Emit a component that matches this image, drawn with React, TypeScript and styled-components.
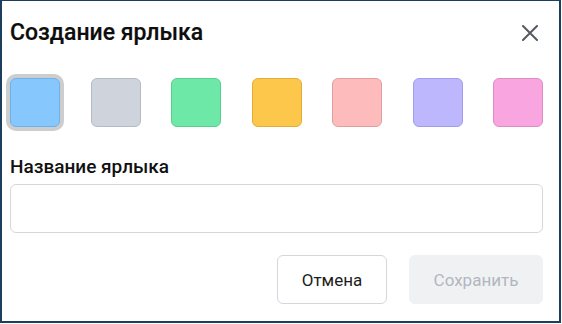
import React, { useState } from "react";
import styled, { createGlobalStyle } from "styled-components";

const GlobalStyle = createGlobalStyle`
  * { box-sizing: border-box; }
  body {
    margin: 0;
    font-family: Roboto, "Noto Sans", sans-serif;
    background: #fff;
  }
`;

const COLORS = [
  { fill: "#86c8fd", edge: "#6eb0ea" },
  { fill: "#cfd4dc", edge: "#b5bbc4" },
  { fill: "#6de8a6", edge: "#58cf8f" },
  { fill: "#fdc74c", edge: "#e2ad3a" },
  { fill: "#febbbc", edge: "#e0a0a2" },
  { fill: "#bdb7fd", edge: "#a39cea" },
  { fill: "#f9a6e0", edge: "#de8cc5" },
];

export default function App() {
  const [selected, setSelected] = useState(0);
  const [name, setName] = useState("");

  return (
    <>
      <GlobalStyle />
      <Dialog>
        <Header>
          <Title>Создание ярлыка</Title>
          <CloseBtn type="button" aria-label="Закрыть">
            <svg width="16" height="16" viewBox="0 0 16 16">
              <path d="M1 1 15 15M15 1 1 15" stroke="#555a61" strokeWidth="2" strokeLinecap="round" />
            </svg>
          </CloseBtn>
        </Header>
        <Swatches>
          {COLORS.map((c, i) => (
            <Swatch
              key={c.fill}
              type="button"
              $fill={c.fill}
              $edge={c.edge}
              $active={i === selected}
              onClick={() => setSelected(i)}
            />
          ))}
        </Swatches>
        <Label htmlFor="label-name">Название ярлыка</Label>
        <Input id="label-name" value={name} onChange={(e) => setName(e.target.value)} />
        <Footer>
          <CancelBtn type="button">Отмена</CancelBtn>
          <SaveBtn type="button" disabled={!name}>
            Сохранить
          </SaveBtn>
        </Footer>
      </Dialog>
    </>
  );
}

const Dialog = styled.div`
  width: 561px;
  height: 323px;
  border: solid #1d3f5e;
  border-width: 1px 2px 2px 2px;
  padding: 14px 16px 0 8px;
  display: flex;
  flex-direction: column;
`;

const Header = styled.div`
  height: 36px;
  display: flex;
  align-items: center;
  justify-content: space-between;
`;

const Title = styled.h2`
  margin: 0;
  font-size: 23px;
  line-height: 28px;
  font-weight: 500;
  color: #0d0d0d;
  -webkit-text-stroke: 0.2px #0d0d0d;
`;

const CloseBtn = styled.button`
  border: 0;
  background: none;
  padding: 0;
  margin-right: 5px;
  display: flex;
  cursor: pointer;
`;

const Swatches = styled.div`
  margin-top: 27px;
  display: flex;
  justify-content: space-between;
`;

const Swatch = styled.button<{ $fill: string; $edge: string; $active: boolean }>`
  width: 50px;
  height: 49px;
  padding: 0;
  border-radius: 6px;
  background: ${(p) => p.$fill};
  border: 1px solid ${(p) => p.$edge};
  box-shadow: ${(p) => (p.$active ? "0 0 0 4px #cdcdcd" : "none")};
  cursor: pointer;
`;

const Label = styled.label`
  margin-top: 29px;
  font-size: 19px;
  line-height: 22px;
  font-weight: 500;
  color: #111;
`;

const Input = styled.input`
  margin-top: 6px;
  height: 49px;
  width: 100%;
  border: 1px solid #d3d8de;
  border-radius: 6px;
  padding: 0 12px;
  font: inherit;
  font-size: 16px;
  outline: none;
`;

const Footer = styled.div`
  margin-top: 22px;
  display: flex;
  justify-content: flex-end;
  gap: 22px;
`;

const BaseBtn = styled.button`
  height: 49px;
  border-radius: 6px;
  font-family: Roboto, "Noto Sans", sans-serif;
  font-size: 17px;
  padding: 0;
`;

const CancelBtn = styled(BaseBtn)`
  width: 110px;
  background: #fff;
  border: 1px solid #d3d7dd;
  color: #1c1c1c;
  cursor: pointer;
`;

const SaveBtn = styled(BaseBtn)`
  width: 134px;
  background: #f0f1f3;
  border: 1px solid #f0f1f3;
  color: #b1b7bf;
`;
